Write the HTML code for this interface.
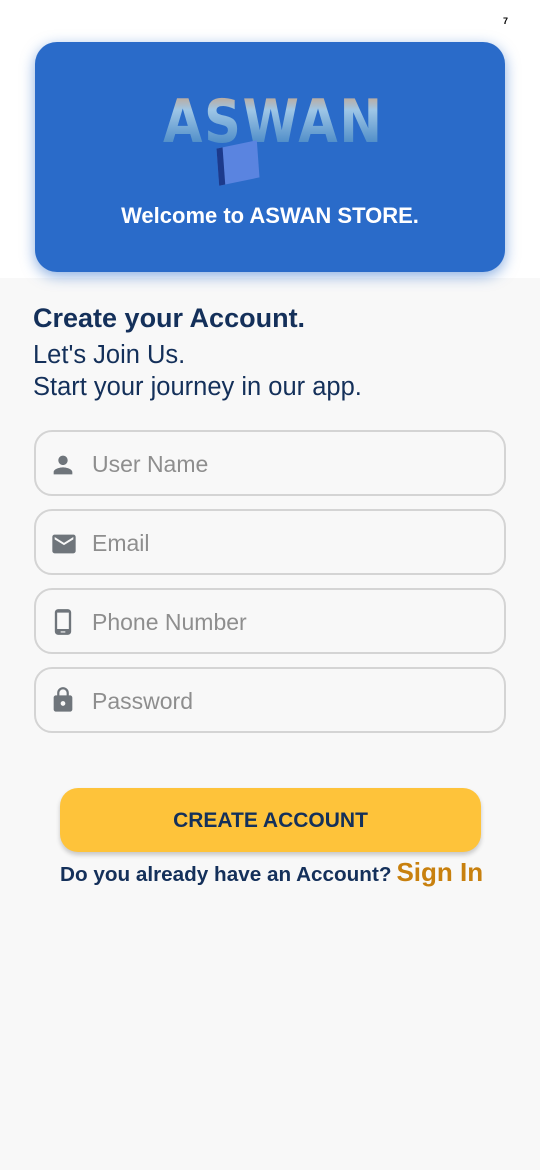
<!DOCTYPE html>
<html><head><meta charset="utf-8"><style>
*{margin:0;padding:0;box-sizing:border-box}
body{width:540px;height:1170px;background:#f8f8f8;font-family:"Liberation Sans",Roboto,sans-serif;position:relative;overflow:hidden}
.top{position:absolute;left:0;top:0;width:540px;height:42px;background:#fff}
.hero{position:absolute;left:0;top:42px;width:540px;height:236px;background:#fff}
.card{position:absolute;left:35px;top:42px;width:470px;height:230px;background:#2a6bc9;border-radius:22px;box-shadow:0 4px 14px rgba(42,107,201,.55)}
.logo{position:absolute;left:163px;top:92px;font-size:60px;font-weight:bold;letter-spacing:2px;font-family:"DejaVu Sans",sans-serif;line-height:1;transform:scaleX(0.85);transform-origin:left;background:linear-gradient(180deg,#c8a080 0%,#9ec6e6 30%,#3a7ec0 100%);-webkit-background-clip:text;color:transparent}
.bag{position:absolute;left:218px;top:144px;width:40px;height:38px;background:#5a84e0;transform:skewX(-8deg) rotate(-12deg);border-left:6px solid #1c3a8c}
.welcome{position:absolute;left:35px;width:470px;top:203px;text-align:center;color:#fff;font-weight:bold;font-size:22px}
h1{position:absolute;left:33px;top:303px;font-size:27px;color:#14305a;font-weight:bold}
.sub{position:absolute;left:33px;top:339px;font-size:25.5px;color:#14305a;line-height:32px}
.f{position:absolute;left:34px;width:472px;height:66px;border:2px solid #d4d4d4;border-radius:18px}
.f svg{position:absolute;left:13px;top:19px}
.f span{position:absolute;left:56px;top:19px;font-size:23px;color:#8e8e8e}
.btn{position:absolute;left:60px;top:788px;width:421px;height:64px;background:#fec33a;border-radius:18px;box-shadow:0 3px 5px rgba(0,0,0,.2);text-align:center;line-height:66px;font-weight:bold;font-size:21px;color:#14305a}
.q{position:absolute;left:60px;top:857px;font-size:20.7px;font-weight:bold;color:#14305a;white-space:nowrap}
.q b{color:#c8800e;font-size:26px;margin-left:5px}
</style></head><body>
<div class="top"></div>
<div style="position:absolute;left:503px;top:16px;font-size:9px;font-weight:bold">7</div>
<div class="hero"></div>
<div class="card"></div>
<div class="logo">ASWAN</div>
<div class="bag"></div>
<div class="welcome">Welcome to ASWAN STORE.</div>
<h1>Create your Account.</h1>
<div class="sub">Let's Join Us.<br>Start your journey in our app.</div>

<div class="f" style="top:430px"><svg width="28" height="28" viewBox="0 0 24 24"><path fill="#6f757b" d="M12 12c2.2 0 4-1.8 4-4s-1.8-4-4-4-4 1.8-4 4 1.8 4 4 4zm0 2c-2.7 0-8 1.3-8 4v2h16v-2c0-2.7-5.3-4-8-4z"/></svg><span>User Name</span></div>
<div class="f" style="top:509px"><svg width="30" height="28" viewBox="0 0 24 24"><path fill="#6f757b" d="M20 4H4c-1.1 0-2 .9-2 2v12c0 1.1.9 2 2 2h16c1.1 0 2-.9 2-2V6c0-1.1-.9-2-2-2zm0 4l-8 5-8-5V6l8 5 8-5v2z"/></svg><span>Email</span></div>
<div class="f" style="top:588px"><svg width="28" height="32" viewBox="0 0 24 24" style="top:16px"><path fill="#6f757b" d="M16 1H8C6.3 1 5 2.3 5 4v16c0 1.7 1.3 3 3 3h8c1.7 0 3-1.3 3-3V4c0-1.7-1.3-3-3-3zm1 17H7V4h10v14zm-3 3h-4v-1h4v1z"/></svg><span>Phone Number</span></div>
<div class="f" style="top:667px"><svg width="28" height="32" viewBox="0 0 24 24" style="top:15px"><path fill="#6f757b" d="M18 8h-1V6c0-2.8-2.2-5-5-5S7 3.2 7 6v2H6c-1.1 0-2 .9-2 2v10c0 1.1.9 2 2 2h12c1.1 0 2-.9 2-2V10c0-1.1-.9-2-2-2zm-6 9c-1.1 0-2-.9-2-2s.9-2 2-2 2 .9 2 2-.9 2-2 2zm3.1-9H8.9V6c0-1.7 1.4-3.1 3.1-3.1s3.1 1.4 3.1 3.1v2z"/></svg><span>Password</span></div>

<div class="btn">CREATE ACCOUNT</div>
<div class="q">Do you already have an Account?<b>Sign In</b></div>
</body></html>
